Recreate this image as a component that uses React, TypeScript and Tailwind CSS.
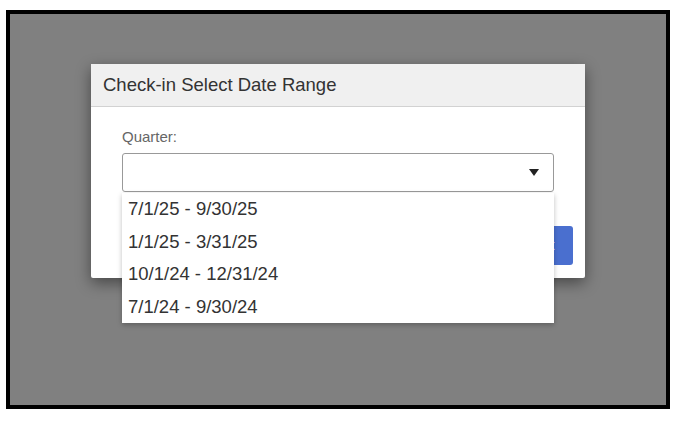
import React from 'react'

const quarters = ['7/1/25 - 9/30/25', '1/1/25 - 3/31/25', '10/1/24 - 12/31/24', '7/1/24 - 9/30/24']

export default function App() {
  return (
    <div className="min-h-screen bg-white pl-[6px] pt-[10px] font-['Liberation_Sans',Arial,sans-serif]">
      {/* overlay */}
      <div className="h-[399px] w-[664px] border-4 border-black bg-[#808080] pl-[81px] pt-[50px]">
        <div className="w-[494px] rounded-[2px] bg-white shadow-[0_5px_15px_rgba(0,0,0,0.45)]">
          <div className="flex h-[43px] items-center border-b border-[#d2d2d2] bg-[#f0f0f0] px-3 text-[18.5px] text-[#333]">
            Check-in Select Date Range
          </div>

          <div className="px-[31px] pt-5">
            <label className="block text-[15px] leading-5 text-[#666]">Quarter:</label>
            <div className="relative mt-[6px]">
              <div className="flex h-[39px] items-center justify-end rounded-[3px] border border-[#999] bg-white pr-[14px]">
                <svg width="10" height="7" viewBox="0 0 10 7">
                  <path d="M0 0h10L5 7z" fill="#222" />
                </svg>
              </div>

              {/* open dropdown */}
              <ul className="absolute left-0 right-0 top-full z-10 mt-px bg-white shadow-[0_2px_5px_rgba(0,0,0,0.25)]">
                {quarters.map((q) => (
                  <li key={q} className="flex h-[32.5px] items-center px-[6px] text-[18.5px] text-[#333]">
                    {q}
                  </li>
                ))}
              </ul>
            </div>
          </div>

          <div className="flex justify-end px-3 pb-[13px] pt-[34px]">
            <button className="h-[39px] w-[84px] rounded-[3px] bg-[#4a6fcf] text-[15px] text-white">Submit</button>
          </div>
        </div>
      </div>
    </div>
  )
}
